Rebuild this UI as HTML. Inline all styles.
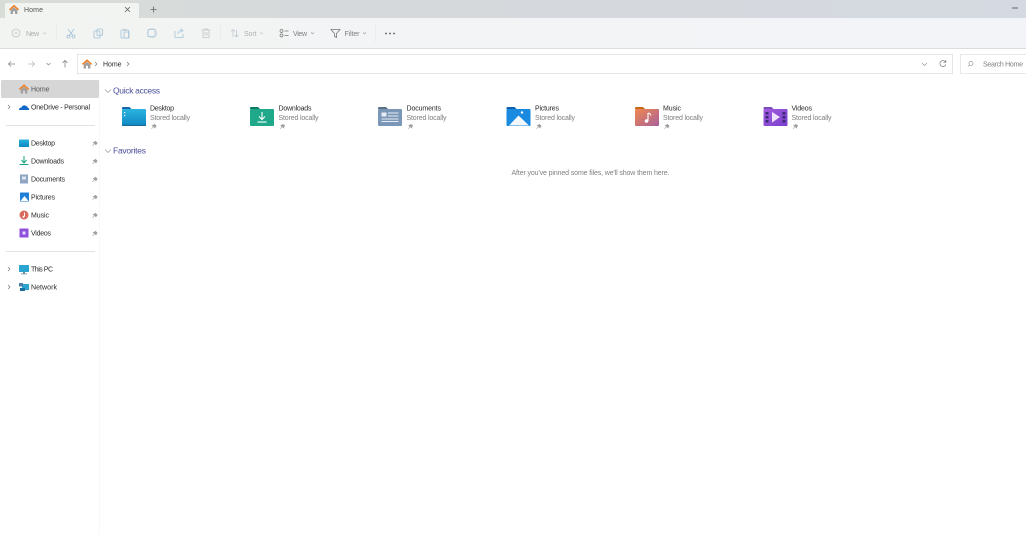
<!DOCTYPE html>
<html><head><meta charset="utf-8"><style>
html,body{margin:0;padding:0;background:#fff;width:1026px;height:534px;overflow:hidden}
svg{display:block;filter:blur(.35px)}
text{font-family:"Liberation Sans",sans-serif;font-size:7px;fill:#2a2a2a}
.g{fill:#808080}.d{fill:#b0b0b0}.h{font-size:8.5px;fill:#4a4e98}
.m{fill:#555}.a{fill:#808080}
.s{fill:none;stroke:#a5c2d8;stroke-width:.8}
.k{fill:none;stroke:#777;stroke-width:.8}
</style></head><body>
<svg width="1026" height="534" viewBox="0 0 1026 534" xmlns="http://www.w3.org/2000/svg">
<defs>
<linearGradient id="bar" x1="0" x2="1" y1="0" y2="0"><stop offset="0" stop-color="#f1f4f0"/><stop offset=".3" stop-color="#f2f4f5"/><stop offset="1" stop-color="#f3f4f8"/></linearGradient>
<linearGradient id="top" x1="0" x2="1" y1="0" y2="0"><stop offset="0" stop-color="#d9ddd8"/><stop offset=".3" stop-color="#d5d9db"/><stop offset="1" stop-color="#d5d9e1"/></linearGradient>
<linearGradient id="fd" x1="0" x2="0" y1="0" y2="1"><stop offset="0" stop-color="#2bb4dd"/><stop offset="1" stop-color="#0e88c4"/></linearGradient>
<linearGradient id="fm" x1="0" x2="1" y1="0" y2="1"><stop offset="0" stop-color="#f0884e"/><stop offset="1" stop-color="#a8609a"/></linearGradient>
<linearGradient id="fv" x1="0" x2="1" y1="0" y2="1"><stop offset="0" stop-color="#a35ce0"/><stop offset="1" stop-color="#7a3fcb"/></linearGradient>
<g id="pin"><path d="M1.500 6 L3.200 3.800 M2.200 2.400 L5 5 L5.400 3.900 L6.300 3 L4.400 1.200 L3.500 2.100 Z" fill="#a0a0a0" stroke="#a0a0a0" stroke-width=".6"/></g>
<g id="home"><path d="M1.600 5.600 L5 2.800 L8.400 5.600 V9.500 H6 V6.800 H4 V9.500 H1.600 Z" fill="#a0a0a0"/><path d="M5 .2 L0 4.800 L.9 6 L5 2.400 L9.100 6 L10 4.800 Z" fill="#ee7f22"/></g>
<path id="chev" d="M0 0 L2 2 L0 4" fill="none" stroke="#777" stroke-width=".7"/>
</defs>

<!-- title bar -->
<rect width="1026" height="18" fill="url(#top)"/>
<path d="M5 18 V5 Q5 3 7 3 H137 Q139 3 139 5 V18 Z" fill="#f2f4f1"/>
<rect x="0" y="18" width="1026" height="30" fill="url(#bar)"/>
<rect x="0" y="48" width="1026" height="1" fill="#dcdcdc"/>
<g transform="translate(9,4.500)"><use href="#home"/></g>
<text x="24" y="12" textLength="19" class="m">Home</text>
<path d="M125 7 L130 12 M130 7 L125 12" stroke="#666" stroke-width=".8"/>
<path d="M153.500 6.500 V12.500 M150.500 9.500 H156.500" stroke="#666" stroke-width=".8"/>
<rect x="1012" y="7.500" width="6" height="1" fill="#666"/>

<!-- toolbar -->
<circle cx="16" cy="33" r="4" fill="none" stroke="#c4c4c4" stroke-width=".8"/><path d="M14.500 33 H17.500 M16 31.500 V34.500" stroke="#ccc" stroke-width=".7"/>
<text x="26" y="36" textLength="13" class="d">New</text>
<path d="M43 32.500 L44.500 34 L46 32.500" fill="none" stroke="#c4c4c4" stroke-width=".6"/>
<rect x="56" y="24" width="1" height="18" fill="#eceeee"/>
<path d="M68 29 L73 36 M74 29 L69 36" class="s"/><circle cx="68.500" cy="36.500" r="1.500" class="s"/><circle cx="73.500" cy="36.500" r="1.500" class="s"/>
<rect x="94" y="31" width="6" height="7" rx="1" class="s"/><rect x="97" y="29" width="5.500" height="6.500" rx="1" class="s"/>
<rect x="121" y="30" width="7.500" height="8" rx="1" class="s"/><rect x="124" y="32" width="5" height="6" class="s"/><rect x="123" y="29" width="3.500" height="1.800" fill="#bccbd6"/>
<circle cx="152" cy="33" r="4.500" fill="none" stroke="#c6d0d6" stroke-width=".8"/><rect x="148" y="29.500" width="7" height="7" fill="none" stroke="#a5c2d8" stroke-width=".7"/>
<path d="M175 31 V37.500 H183 V34 M178 34 Q178 30.500 182 30.500 M180.500 28.500 L183 30.500 L180.500 32.500" class="s"/>
<path d="M201.500 30 H210.500 M203 30 V37.500 H209 V30 M204.500 30 V29 H207.500 V30 M205 32 V35.500 M207 32 V35.500" fill="none" stroke="#c4c4c4" stroke-width=".8"/>
<rect x="220" y="24" width="1" height="18" fill="#eceeee"/>
<path d="M233 37 V29.500 M231 31.500 L233 29.500 L235 31.500 M236.500 29.500 V37 M234.500 35 L236.500 37 L238.500 35" fill="none" stroke="#bcc5cc" stroke-width=".7"/>
<text x="244" y="36" textLength="12.500" class="d">Sort</text>
<path d="M260 32.500 L261.500 34 L263 32.500" fill="none" stroke="#c4c4c4" stroke-width=".6"/>
<circle cx="281.500" cy="31" r="1.500" fill="none" stroke="#777" stroke-width=".7"/><circle cx="281.500" cy="35.500" r="1.500" fill="none" stroke="#777" stroke-width=".7"/>
<path d="M284.500 31 H288.500 M284.500 35.500 H288.500" stroke="#777" stroke-width=".7"/>
<text x="293" y="36" textLength="14" class="a">View</text>
<path d="M311 32.500 L312.500 34 L314 32.500" fill="none" stroke="#999" stroke-width=".6"/>
<path d="M331 29.500 H340 L336.500 33.500 V37.500 L334.500 36.500 V33.500 Z" class="k"/>
<text x="344.500" y="36" textLength="15" class="a">Filter</text>
<path d="M363 32.500 L364.500 34 L366 32.500" fill="none" stroke="#999" stroke-width=".6"/>
<rect x="375" y="24" width="1" height="18" fill="#eceeee"/>
<circle cx="386" cy="33.500" r=".9" fill="#555"/><circle cx="390" cy="33.500" r=".9" fill="#555"/><circle cx="394" cy="33.500" r=".9" fill="#555"/>

<!-- nav -->
<path d="M8.500 64 H15 M11 61.500 L8.500 64 L11 66.500" fill="none" stroke="#888" stroke-width=".8"/>
<path d="M28 64 H34.500 M32 61.500 L34.500 64 L32 66.500" fill="none" stroke="#bbb" stroke-width=".8"/>
<path d="M46.500 63 L48.500 65 L50.500 63" fill="none" stroke="#888" stroke-width=".7"/>
<path d="M65 67.500 V60.500 M62.500 63 L65 60.500 L67.500 63" fill="none" stroke="#888" stroke-width=".8"/>
<rect x="77.500" y="54.500" width="875" height="19" fill="#fff" stroke="#e6e6e6"/>
<g transform="translate(82,59)"><use href="#home"/></g>
<use href="#chev" transform="translate(95,62)"/>
<text x="103" y="66.500" textLength="18.500">Home</text>
<use href="#chev" transform="translate(127,62)"/>
<path d="M922 63 L924.500 65.500 L927 63" fill="none" stroke="#999" stroke-width=".7"/>
<path d="M945.500 62 A3 3 0 1 0 945.800 64.500 M945.800 60 V62.300 H943.500" fill="none" stroke="#777" stroke-width=".7"/>
<rect x="960.500" y="54.500" width="70" height="19" fill="#fff" stroke="#e8e8e8"/>
<circle cx="971" cy="63.500" r="2" fill="none" stroke="#999" stroke-width=".7"/><path d="M969.500 65 L968 66.500" stroke="#999" stroke-width=".7"/>
<text x="983" y="66.500" textLength="40" class="g">Search Home</text>

<!-- sidebar -->
<rect x="99" y="78" width="1" height="456" fill="#f8f8f8"/>
<rect x="1" y="80" width="98" height="18" rx="1.500" fill="#d6d6d6"/>
<g transform="translate(19,84)"><use href="#home"/></g>
<text x="31" y="91.500" textLength="18.500" class="m">Home</text>
<use href="#chev" transform="translate(8,105)"/>
<path d="M19 110 Q19 107.500 21.500 107.500 Q22.500 105 25 105.500 Q27.500 106 27.500 107.500 Q29.500 108 29 110 Z" fill="#1068c8"/>
<text x="31" y="109.500" textLength="59">OneDrive - Personal</text>
<rect x="6" y="125" width="89" height="1" fill="#e2e2e2"/>

<rect x="19" y="139.500" width="10" height="7.500" rx=".5" fill="url(#fd)"/>
<text x="31" y="145.500" textLength="24">Desktop</text><use href="#pin" transform="translate(91,140)"/>
<path d="M24 156 V162 M21.500 160 L24 163 L26.500 160" fill="none" stroke="#1aa37f" stroke-width="1"/><rect x="19.500" y="164" width="9" height="1" fill="#1aa37f"/>
<text x="31" y="163.500" textLength="33">Downloads</text><use href="#pin" transform="translate(91,158)"/>
<rect x="20" y="174.500" width="8" height="9" fill="#8ea6c3"/><rect x="22" y="176.500" width="4" height="3" fill="#dfe6ee"/>
<text x="31" y="181.500" textLength="34">Documents</text><use href="#pin" transform="translate(91,176)"/>
<rect x="20" y="192.500" width="9" height="9" rx=".5" fill="#1f7fd6"/><path d="M20.500 201 L24.500 196 L28.500 201 Z" fill="#fff"/>
<text x="31" y="199.500" textLength="24">Pictures</text><use href="#pin" transform="translate(91,194)"/>
<circle cx="24" cy="215" r="4.500" fill="#d86a5e"/><path d="M24.500 212.500 V216.500" stroke="#fff" stroke-width="1"/><circle cx="23.500" cy="216.800" r="1" fill="#fff"/>
<text x="31" y="217.500" textLength="18">Music</text><use href="#pin" transform="translate(91,212)"/>
<rect x="19.500" y="228.500" width="9" height="9" rx=".5" fill="#8f4fdc"/><rect x="22.500" y="231.500" width="3" height="3" fill="#e8dcff"/>
<text x="31" y="235.500" textLength="20">Videos</text><use href="#pin" transform="translate(91,230)"/>
<rect x="6" y="251" width="89" height="1" fill="#e2e2e2"/>
<use href="#chev" transform="translate(8,267)"/>
<rect x="19" y="265" width="10" height="7" rx=".5" fill="#2aa5cf"/><rect x="23" y="272" width="2" height="1.500" fill="#6f8ea0"/><rect x="21" y="273.500" width="6" height=".8" fill="#6f8ea0"/>
<text x="31" y="271.500" textLength="22">This PC</text>
<use href="#chev" transform="translate(8,285)"/>
<rect x="22" y="284" width="7" height="6" fill="#2aa5cf"/><rect x="19" y="283" width="4" height="3.500" fill="#4d7fa5"/><rect x="20" y="288" width="5" height="3" fill="#1a6f9c"/>
<text x="31" y="289.500" textLength="26">Network</text>

<!-- quick access -->
<path d="M105 89.500 L108 92.500 L111 89.500" fill="none" stroke="#999" stroke-width=".7"/>
<text x="113" y="93.500" class="h" textLength="47">Quick access</text>

<!-- Desktop -->
<path d="M122 108 Q122 107 123 107 H129.500 L131.500 109 H122 Z" fill="#1767ae"/><rect x="122" y="109" width="24" height="17" rx="1" fill="url(#fd)"/><rect x="122" y="124.800" width="24" height="1.200" fill="#1a6a9c"/><rect x="124" y="112" width="1.200" height="1.200" fill="#fff"/><rect x="124" y="115" width="1.200" height="1.200" fill="#fff"/>
<text x="150" y="110.500" textLength="24">Desktop</text><text x="150" y="120" textLength="40" class="g">Stored locally</text><use href="#pin" transform="translate(150,123)"/>
<!-- Downloads -->
<path d="M250 108 Q250 107 251 107 H258 L260 109 H250 Z" fill="#0c7c62"/><rect x="250" y="109" width="24" height="17" rx="1" fill="#1fa98a"/><path d="M262 112 V119 M259 116.500 L262 119.500 L265 116.500" fill="none" stroke="#fff" stroke-width="1.100"/><rect x="257.500" y="121.500" width="9" height="1.100" fill="#fff"/>
<text x="278.500" y="110.500" textLength="33">Downloads</text><text x="278.500" y="120" textLength="40" class="g">Stored locally</text><use href="#pin" transform="translate(278.500,123)"/>
<!-- Documents -->
<path d="M378 108 Q378 107 379 107 H386 L388 109 H378 Z" fill="#5c7186"/><rect x="378" y="109" width="24" height="17" rx="1" fill="#7b97b8"/><rect x="381.500" y="112.500" width="5" height="4" fill="#e8edf3"/><rect x="388" y="112.500" width="10.500" height="1" fill="#e8edf3"/><rect x="388" y="115.500" width="10.500" height="1" fill="#e8edf3"/><rect x="381.500" y="118.500" width="17" height="1" fill="#e8edf3"/><rect x="381.500" y="121" width="17" height="1" fill="#e8edf3"/>
<text x="406.500" y="110.500" textLength="34.500">Documents</text><text x="406.500" y="120" textLength="40" class="g">Stored locally</text><use href="#pin" transform="translate(406.500,123)"/>
<!-- Pictures -->
<path d="M506.500 108 Q506.500 107 507.500 107 H514.500 L516.500 109 H506.500 Z" fill="#0f5fa8"/><rect x="506.500" y="109" width="24" height="17" rx="1" fill="#1a8ae0"/><path d="M509 125.500 L518.500 115.500 L529 125.500 Z" fill="#f2f8fd"/><circle cx="522" cy="112.500" r="1.200" fill="#fff"/>
<text x="535" y="110.500" textLength="24">Pictures</text><text x="535" y="120" textLength="40" class="g">Stored locally</text><use href="#pin" transform="translate(535,123)"/>
<!-- Music -->
<path d="M635 108 Q635 107 636 107 H643 L645 109 H635 Z" fill="#c66a12"/><rect x="635" y="109" width="24" height="17" rx="1" fill="url(#fm)"/><path d="M648 113 V121 M648 113 Q650.500 113.500 651 115.500" fill="none" stroke="#fff" stroke-width="1.100"/><circle cx="646.500" cy="121" r="1.800" fill="#fff"/>
<text x="663" y="110.500" textLength="18">Music</text><text x="663" y="120" textLength="40" class="g">Stored locally</text><use href="#pin" transform="translate(663,123)"/>
<!-- Videos -->
<path d="M763.500 108 Q763.500 107 764.500 107 H771.500 L773.500 109 H763.500 Z" fill="#7a4ab8"/><rect x="763.500" y="109" width="24" height="17" rx="1" fill="url(#fv)"/><g fill="#3d2a78"><rect x="765.500" y="112" width="3" height="2.500"/><rect x="765.500" y="116" width="3" height="2.500"/><rect x="765.500" y="120" width="3" height="2.500"/><rect x="782.500" y="112" width="3" height="2.500"/><rect x="782.500" y="116" width="3" height="2.500"/><rect x="782.500" y="120" width="3" height="2.500"/></g><path d="M772 112 L780 117 L772 122.500 Z" fill="#eee2ff"/>
<text x="791.500" y="110.500" textLength="20.500">Videos</text><text x="791.500" y="120" textLength="40" class="g">Stored locally</text><use href="#pin" transform="translate(791.500,123)"/>

<!-- favorites -->
<path d="M105 149.500 L108 152.500 L111 149.500" fill="none" stroke="#999" stroke-width=".7"/>
<text x="113" y="153.500" class="h" textLength="33">Favorites</text>
<text x="511.500" y="175" textLength="158" class="g">After you've pinned some files, we'll show them here.</text>
</svg>
</body></html>
